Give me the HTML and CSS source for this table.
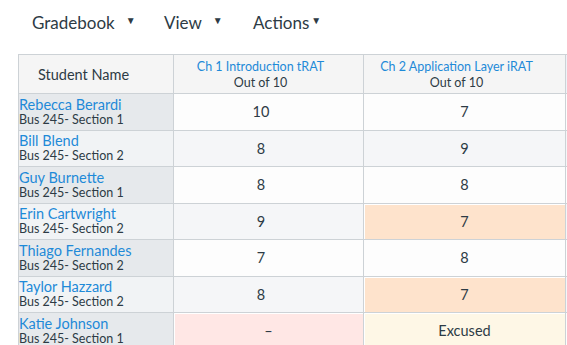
FILE: index.html
```html
<!DOCTYPE html>
<html>
<head>
<meta charset="utf-8">
<link rel="stylesheet" href="styles.css">
</head>
<body>
<nav class="menu">
  <span class="menu-item m-grade">Gradebook<span class="caret">&#9660;</span></span>
  <span class="menu-item m-view">View<span class="caret">&#9660;</span></span>
  <span class="menu-item m-act">Actions<span class="caret tight">&#9660;</span></span>
</nav>
<div class="grid-wrap">
<div class="grid">
  <div class="cell head student-head">Student Name</div>
  <div class="cell head col-head c2"><span class="link">Ch 1 Introduction tRAT</span><span>Out of 10</span></div>
  <div class="cell head col-head"><span class="link">Ch 2 Application Layer iRAT</span><span>Out of 10</span></div>
  <div class="cell head extra-head"></div>

  <div class="cell student odd"><span class="name">Rebecca Berardi</span><span class="sec">Bus 245- Section 1</span></div>
  <div class="cell score c2 odd">10</div>
  <div class="cell score odd">7</div>
  <div class="cell extra odd"></div>

  <div class="cell student even"><span class="name">Bill Blend</span><span class="sec">Bus 245- Section 2</span></div>
  <div class="cell score c2 even">8</div>
  <div class="cell score even">9</div>
  <div class="cell extra even"></div>

  <div class="cell student odd"><span class="name">Guy Burnette</span><span class="sec">Bus 245- Section 1</span></div>
  <div class="cell score c2 odd">8</div>
  <div class="cell score odd">8</div>
  <div class="cell extra odd"></div>

  <div class="cell student even"><span class="name">Erin Cartwright</span><span class="sec">Bus 245- Section 2</span></div>
  <div class="cell score c2 even">9</div>
  <div class="cell score late">7</div>
  <div class="cell extra even"></div>

  <div class="cell student odd"><span class="name">Thiago Fernandes</span><span class="sec">Bus 245- Section 2</span></div>
  <div class="cell score c2 odd">7</div>
  <div class="cell score odd">8</div>
  <div class="cell extra odd"></div>

  <div class="cell student even"><span class="name">Taylor Hazzard</span><span class="sec">Bus 245- Section 2</span></div>
  <div class="cell score c2 even">8</div>
  <div class="cell score late">7</div>
  <div class="cell extra even"></div>

  <div class="cell student odd"><span class="name">Katie Johnson</span><span class="sec">Bus 245- Section 1</span></div>
  <div class="cell score missing">&ndash;</div>
  <div class="cell score excused">Excused</div>
  <div class="cell extra odd"></div>
</div>
</div>
</body>
</html>
```
FILE: styles.css
```css
* { box-sizing: border-box; }
html, body { margin: 0; padding: 0; background: #ffffff; overflow: hidden; }
body {
  font-family: Lato, "Open Sans", sans-serif;
  color: #2d3b45;
  width: 567px;
  height: 345px;
}
.menu {
  display: flex;
  align-items: flex-start;
  height: 54px;
  padding: 12px 0 0 32px;
  font-size: 17px;
  line-height: 22px;
  color: #2d3b45;
}
.menu-item { white-space: nowrap; display: flex; align-items: center; }
.caret { font-size: 10px; margin-left: 11px; position: relative; top: -3px; }
.caret.tight { margin-left: 2px; }
.m-grade { width: 132px; }
.m-view { width: 89px; }

.grid-wrap {
  margin-left: 18px;
  width: 549px;
  overflow: hidden;
}
.grid {
  display: grid;
  grid-template-columns: 155px 190px 202px 20px;
  grid-template-rows: 39px repeat(7, 36.5px);
  border-top: 1px solid #cdd2d6;
  border-left: 1px solid #cdd2d6;
  width: 568px;
}
.cell {
  border-right: 1.5px solid #cdd2d6;
  border-bottom: 1.5px solid #cdd2d6;
  display: flex;
  align-items: center;
  justify-content: center;
  font-size: 14.5px;
}
.head { background: #f5f5f5; }
.student-head { justify-content: flex-start; padding-left: 19px; font-size: 14.5px; }
.col-head {
  flex-direction: column;
  font-size: 12.5px;
  line-height: 16px;
  padding-right: 16px;
  padding-top: 1px;
}
.extra-head { background: #eef3f8; }
.link { color: #1e8ad8; }
.student {
  flex-direction: column;
  align-items: flex-start;
  justify-content: center;
  padding-left: 0;
}
.student.odd { background: #e6e9ec; }
.student.even { background: #f1f3f5; }
.name { color: #1e8ad8; font-size: 14.5px; line-height: 16px; }
.sec { font-size: 12.5px; line-height: 14px; color: #2d3b45; }
.score.odd { background: #fdfdfd; }
.score.even { background: #f5f6f8; }
.score.c2 { padding-right: 15px; }
.extra.odd { background: #fdfdfd; }
.extra.even { background: #f5f6f8; }
.late { background: #fee3cc; box-shadow: inset 1px 1px 0 #ffffff; }
.missing { background: #ffe7e5; box-shadow: inset 1px 1px 0 #ffffff; }
.excused { background: #fef7e6; box-shadow: inset 1px 1px 0 #ffffff; }
```
